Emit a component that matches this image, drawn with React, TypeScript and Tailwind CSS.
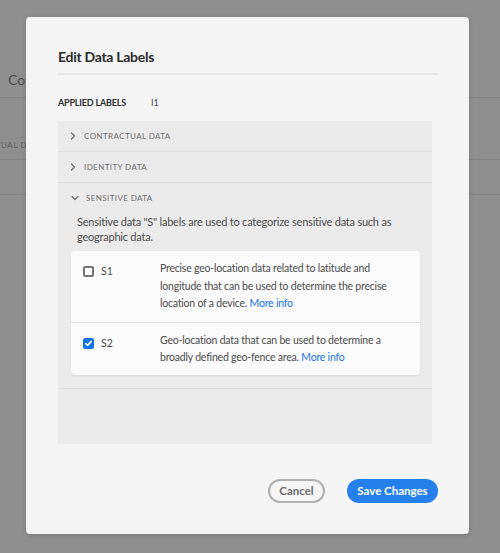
import React from "react";

const font = { fontFamily: "Lato, 'Open Sans', sans-serif" };

function Chevron({ open }: { open?: boolean }) {
  return (
    <svg width="8" height="8" viewBox="0 0 8 8" className="shrink-0">
      {open ? (
        <path d="M1 2.5 L4 5.5 L7 2.5" fill="none" stroke="#6e6e6e" strokeWidth="1.3" strokeLinecap="round" strokeLinejoin="round" />
      ) : (
        <path d="M2.5 1 L5.5 4 L2.5 7" fill="none" stroke="#6e6e6e" strokeWidth="1.3" strokeLinecap="round" strokeLinejoin="round" />
      )}
    </svg>
  );
}

function Checkbox({ checked }: { checked?: boolean }) {
  if (checked) {
    return (
      <span className="flex h-[11px] w-[11px] shrink-0 items-center justify-center rounded-[2px] bg-[#1473e6]">
        <svg width="9" height="9" viewBox="0 0 9 9">
          <path d="M1.8 4.6 L3.7 6.4 L7.2 2.4" fill="none" stroke="#fff" strokeWidth="1.6" strokeLinecap="round" strokeLinejoin="round" />
        </svg>
      </span>
    );
  }
  return <span className="h-[11px] w-[11px] shrink-0 rounded-[2px] border-2 border-[#747474] bg-white" />;
}

function CollapsedRow({ label }: { label: string }) {
  return (
    <div className="flex h-[31px] items-center gap-[7px] border-b border-[#e0e0e0] pl-[11px]">
      <Chevron />
      <span className="text-[8px] uppercase tracking-[0.05em] text-[#6e6e6e]">{label}</span>
    </div>
  );
}

export default function App() {
  return (
    <div className="relative h-[553px] w-[500px] overflow-hidden bg-[#8f8f8f]" style={font}>
      {/* page behind the dialog */}
      <div className="flex h-[98px] items-end border-b border-[#848484] pb-[7px] pl-[8px]">
        <span className="text-[14px] text-[#4e4e4e]">Contractual</span>
      </div>
      <div className="flex h-[62px] items-end border-b border-[#848484] pb-[8px]">
        <span className="ml-[-47px] text-[8px] uppercase tracking-[0.08em] text-[#5e5e5e]">Contractual Data</span>
      </div>
      <div className="h-[35px] border-b border-[#848484]" />

      {/* dialog */}
      <div className="absolute left-[26px] top-[17px] flex h-[517px] w-[443px] flex-col rounded-[4px] bg-[#f5f5f5] pl-[32px] pr-[31px] pt-[30px] pb-[31px] shadow-[0_1px_4px_rgba(0,0,0,0.15)]">
        <h2 className="h-[20px] text-[14px] font-bold leading-[20px] tracking-[-0.02em] text-[#2c2c2c]">Edit Data Labels</h2>
        <div className="mt-[6px] h-[2px] bg-[#e8e8e8]" />

        <div className="mt-[20px] flex h-[16px] items-center text-[9px] leading-[16px]">
          <span className="w-[93px] font-bold tracking-[-0.02em] text-[#2c2c2c]">APPLIED LABELS</span>
          <span className="text-[#4b4b4b]">I1</span>
        </div>

        <div className="mt-[10px] flex h-[323px] w-[374px] flex-col bg-[#ebebeb]">
          <CollapsedRow label="Contractual Data" />
          <CollapsedRow label="Identity Data" />

          <div className="flex flex-col border-b border-[#e0e0e0] pb-[13px] pl-[13px] pr-[12px]">
            <div className="flex h-[30px] items-center gap-[7px]">
              <Chevron open />
              <span className="text-[8px] uppercase tracking-[0.05em] text-[#6e6e6e]">Sensitive Data</span>
            </div>
            <p className="ml-[6px] mt-[1px] whitespace-nowrap text-[11px] leading-[15px] tracking-[-0.02em] text-[#4b4b4b]">
              Sensitive data "S" labels are used to categorize sensitive data such as
              <br />
              geographic data.
            </p>

            <div className="mt-[7px] flex flex-col rounded-[4px] bg-[#fbfbfb] shadow-[0_1px_2px_rgba(0,0,0,0.08)]">
              <div className="flex border-b border-[#e4e4e4] pb-[9px] pt-[9px]">
                <div className="flex w-[89px] items-start gap-[7px] pl-[12px] pt-[6px]">
                  <Checkbox />
                  <span className="text-[10.5px] leading-[11px] text-[#4b4b4b]">S1</span>
                </div>
                <p className="whitespace-nowrap text-[10.5px] leading-[17.5px] tracking-[-0.02em] text-[#4b4b4b]">
                  Precise geo-location data related to latitude and
                  <br />
                  longitude that can be used to determine the precise
                  <br />
                  location of a device. <span className="text-[#1473e6]">More info</span>
                </p>
              </div>
              <div className="flex pb-[8px] pt-[9px]">
                <div className="flex w-[89px] items-start gap-[7px] pl-[12px] pt-[6px]">
                  <Checkbox checked />
                  <span className="text-[10.5px] leading-[11px] text-[#4b4b4b]">S2</span>
                </div>
                <p className="whitespace-nowrap text-[10.5px] leading-[17.5px] tracking-[-0.02em] text-[#4b4b4b]">
                  Geo-location data that can be used to determine a
                  <br />
                  broadly defined geo-fence area. <span className="text-[#1473e6]">More info</span>
                </p>
              </div>
            </div>
          </div>
        </div>

        <div className="mt-auto flex justify-end gap-[22px]">
          <button className="h-[24px] w-[57px] rounded-full border-2 border-[#b0b0b0] text-[11.5px] font-bold text-[#6e6e6e]">
            Cancel
          </button>
          <button className="h-[24px] w-[91px] rounded-full bg-[#2680eb] text-[11.5px] font-bold text-white">
            Save Changes
          </button>
        </div>
      </div>
    </div>
  );
}
